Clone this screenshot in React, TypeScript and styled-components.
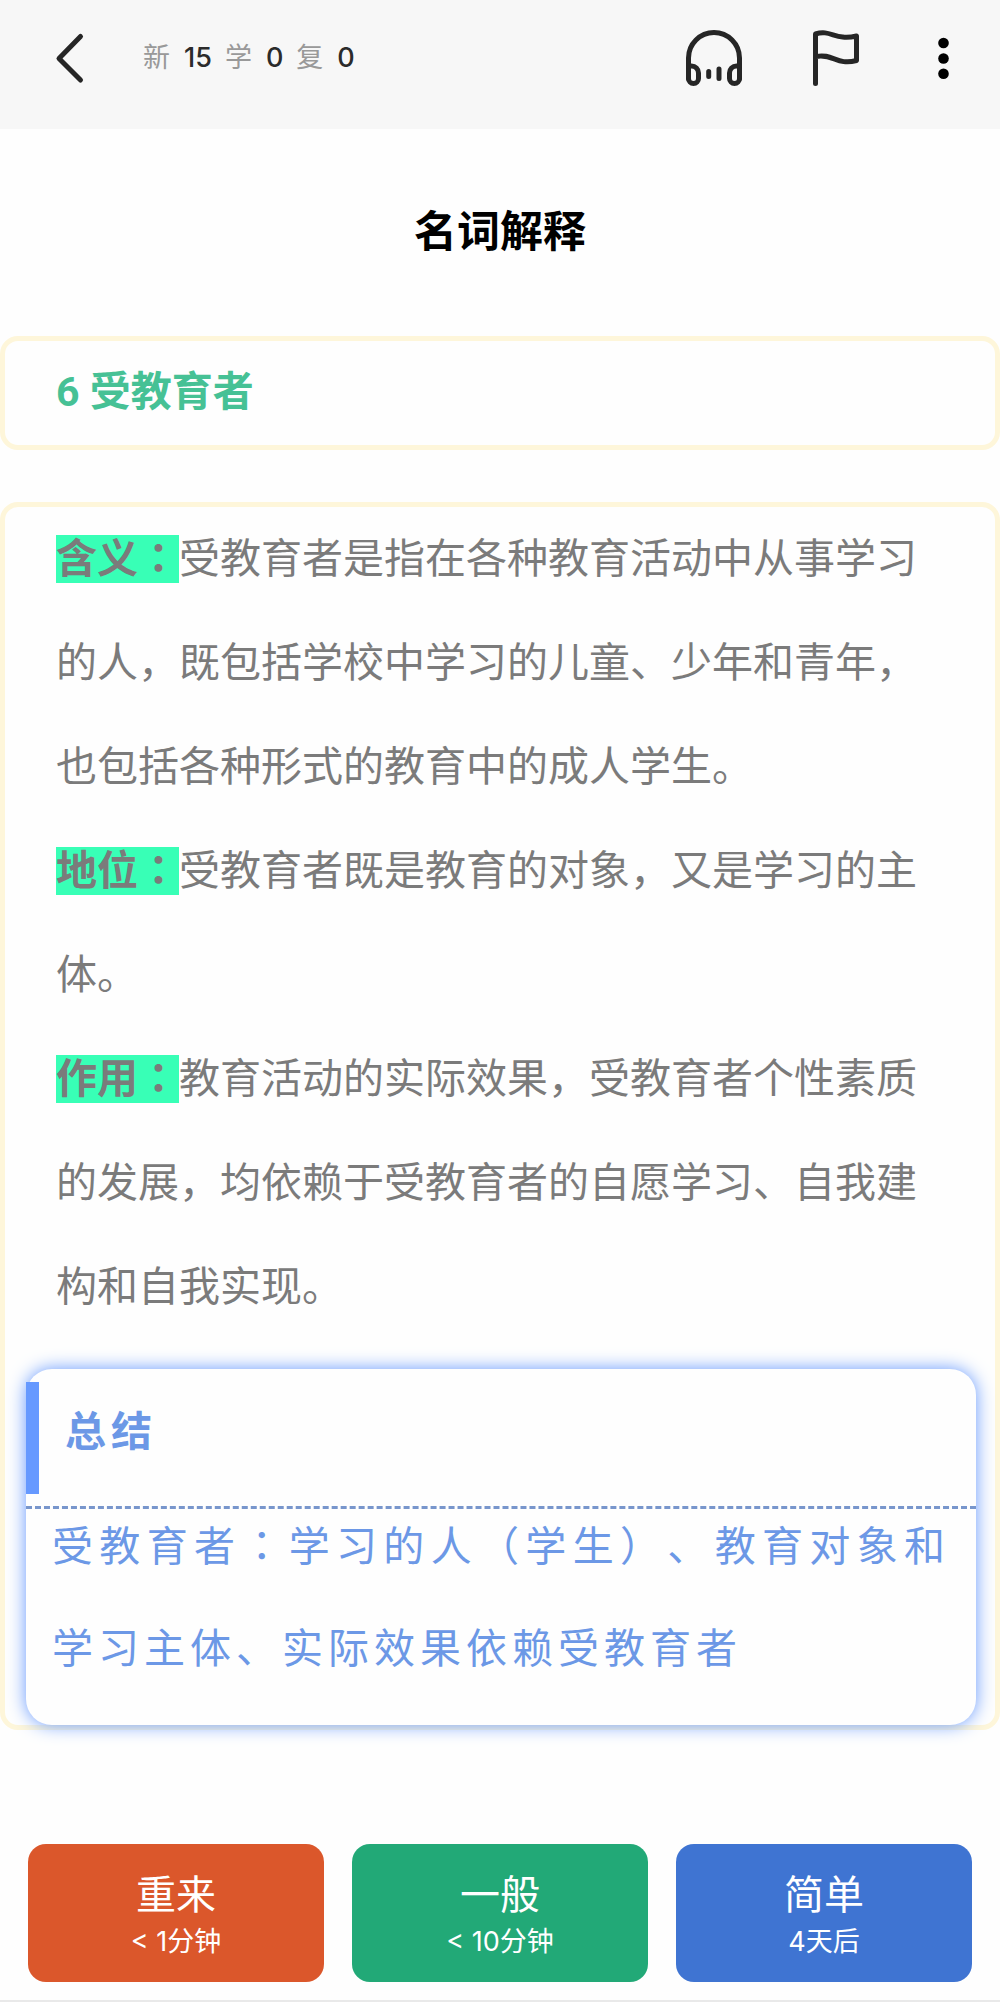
import React from "react";
import styled, { createGlobalStyle } from "styled-components";

const GlobalStyle = createGlobalStyle`
  *, *::before, *::after { box-sizing: border-box; }
  body {
    margin: 0;
    background: #fefefe;
    font-family: Roboto, "Noto Sans CJK SC", sans-serif;
    text-spacing-trim: space-all;
  }
  h1, h2, h3, p, dl, dd { margin: 0; }
  button { font-family: inherit; border: 0; cursor: pointer; }
`;

const Page = styled.div`
  min-height: 100vh;
  display: flex;
  flex-direction: column;
`;

const Header = styled.header`
  display: flex;
  align-items: center;
  padding: 28px 26px 41px 42px;
  background: #f7f7f7;
`;

const IconButton = styled.button`
  display: flex;
  padding: 0;
  background: none;
  color: #262626;
`;

const Icon = styled.svg`
  display: block;
  width: 60px;
  height: 60px;
  fill: none;
  stroke: currentColor;
  stroke-width: 5;
  stroke-linecap: round;
  stroke-linejoin: round;
`;

const Stats = styled.dl`
  display: flex;
  gap: 13px;
  margin-left: 41px;
  font: 400 27px/36px Inter, "Noto Sans CJK SC", sans-serif;
`;

const Stat = styled.div`
  display: flex;
  gap: 14px;
`;

const StatName = styled.dt`
  color: #999;
`;

const StatValue = styled.dd`
  color: #2b2b2b;
  font-weight: 500;
`;

const Actions = styled.nav`
  display: flex;
  gap: 55px;
  margin-left: auto;
`;

const DeckTitle = styled.h1`
  padding: 78px 0;
  font-size: 43px;
  line-height: 51px;
  text-align: center;
  color: #000;
`;

const Cards = styled.main`
  display: flex;
  flex-direction: column;
  gap: 52px;
`;

const Card = styled.section`
  border: 5px solid #fef6da;
  border-radius: 18px;
  font-size: 41px;
  line-height: 104px;
`;

const Term = styled.h2`
  padding: 0 51px 2px;
  font-size: 41px;
  line-height: 102px;
  color: #46c195;
`;

const Definition = styled.p`
  padding: 0 51px;
  color: #7b7b7b;
`;

const Mark = styled.strong`
  background: #38ffb6;
`;

const CenteredColon = styled.span`
  font-family: Roboto, "Noto Sans CJK TC", sans-serif;
`;

const Summary = styled.section`
  margin: 30px 19px 0 21px;
  padding: 13px 0 25px;
  border-radius: 26px;
  background: #fefefe;
  box-shadow: 0 0 18px #6699ff;
  color: #6c98e6;
  letter-spacing: 5px;
`;

const SummaryHead = styled.div`
  padding-bottom: 12px;
  border-bottom: 3px dashed #7896cc;
`;

const SummaryTitle = styled.h3`
  padding: 0 26px 12px;
  border-left: 13px solid #6699ff;
  font-size: 41px;
  line-height: 100px;
`;

const SummaryText = styled.p`
  margin-top: -13px;
  padding: 0 26px;
  line-height: 102px;
  text-align: justify;
`;

const Footer = styled.footer`
  display: grid;
  grid-template-columns: repeat(3, 1fr);
  gap: 28px;
  margin-top: auto;
  padding: 28px 28px 18px;
  border-bottom: 2px solid #e9e9e9;
`;

const Answer = styled.button<{ $color: string }>`
  display: flex;
  flex-direction: column;
  align-items: center;
  gap: 4px;
  padding: 28px 0 22px;
  border-radius: 18px;
  background: ${(p) => p.$color};
  color: #fff;
`;

const AnswerLabel = styled.span`
  font-size: 40px;
  line-height: 48px;
`;

const AnswerDelay = styled.span`
  font: 400 27px/36px Inter, "Noto Sans CJK SC", sans-serif;
`;

const stats = [
  { name: "新", value: 15 },
  { name: "学", value: 0 },
  { name: "复", value: 0 },
];

const definitions = [
  { label: "含义", text: "受教育者是指在各种教育活动中从事学习的人，既包括学校中学习的儿童、少年和青年，也包括各种形式的教育中的成人学生。" },
  { label: "地位", text: "受教育者既是教育的对象，又是学习的主体。" },
  { label: "作用", text: "教育活动的实际效果，受教育者个性素质的发展，均依赖于受教育者的自愿学习、自我建构和自我实现。" },
];

const answers = [
  { label: "重来", delay: "< 1分钟", color: "#db572b" },
  { label: "一般", delay: "< 10分钟", color: "#22a977" },
  { label: "简单", delay: "4天后", color: "#3f74d2" },
];

export default function App() {
  return (
    <Page>
      <GlobalStyle />
      <Header>
        <IconButton aria-label="返回">
          <Icon viewBox="0 0 60 60">
            <path d="M38.500 8.500L17 30.500L38.500 52" />
          </Icon>
        </IconButton>
        <Stats>
          {stats.map((s) => (
            <Stat key={s.name}>
              <StatName>{s.name}</StatName>
              <StatValue>{s.value}</StatValue>
            </Stat>
          ))}
        </Stats>
        <Actions>
          <IconButton aria-label="朗读">
            <Icon viewBox="0 0 60 60">
              <path d="M4.500 50.500V30a25.500 25.500 0 0 1 51 0V50.500" />
              <path d="M4.500 38H7.500a7 7 0 0 1 7 7V50.500a5 5 0 0 1-10 0" />
              <path d="M55.500 38H52.500a7 7 0 0 0-7 7V50.500a5 5 0 0 0 10 0" />
              <path d="M24.700 43.500V48.500M35 41V50.500" />
            </Icon>
          </IconButton>
          <IconButton aria-label="标记">
            <Icon viewBox="0 0 60 60">
              <path d="M16.500 55.500V6C32 1 36 13 57.500 8V32.500C38 38 34 25 17 28.500" />
            </Icon>
          </IconButton>
          <IconButton aria-label="更多">
            <Icon viewBox="0 0 60 60">
              <g fill="#000" stroke="none">
                <circle cx="29.500" cy="15" r="5.300" />
                <circle cx="29.500" cy="30.500" r="5.300" />
                <circle cx="29.500" cy="45.700" r="5.300" />
              </g>
            </Icon>
          </IconButton>
        </Actions>
      </Header>
      <DeckTitle>名词解释</DeckTitle>
      <Cards>
        <Card>
          <Term>6 受教育者</Term>
        </Card>
        <Card>
          {definitions.map((d) => (
            <Definition key={d.label}>
              <Mark>
                {d.label}
                <CenteredColon>：</CenteredColon>
              </Mark>
              {d.text}
            </Definition>
          ))}
          <Summary>
            <SummaryHead>
              <SummaryTitle>总结</SummaryTitle>
            </SummaryHead>
            <SummaryText>
              受教育者<CenteredColon>：</CenteredColon>
              学习的人（学生）、教育对象和学习主体、实际效果依赖受教育者
            </SummaryText>
          </Summary>
        </Card>
      </Cards>
      <Footer>
        {answers.map((a) => (
          <Answer key={a.label} $color={a.color}>
            <AnswerLabel>{a.label}</AnswerLabel>
            <AnswerDelay>{a.delay}</AnswerDelay>
          </Answer>
        ))}
      </Footer>
    </Page>
  );
}
